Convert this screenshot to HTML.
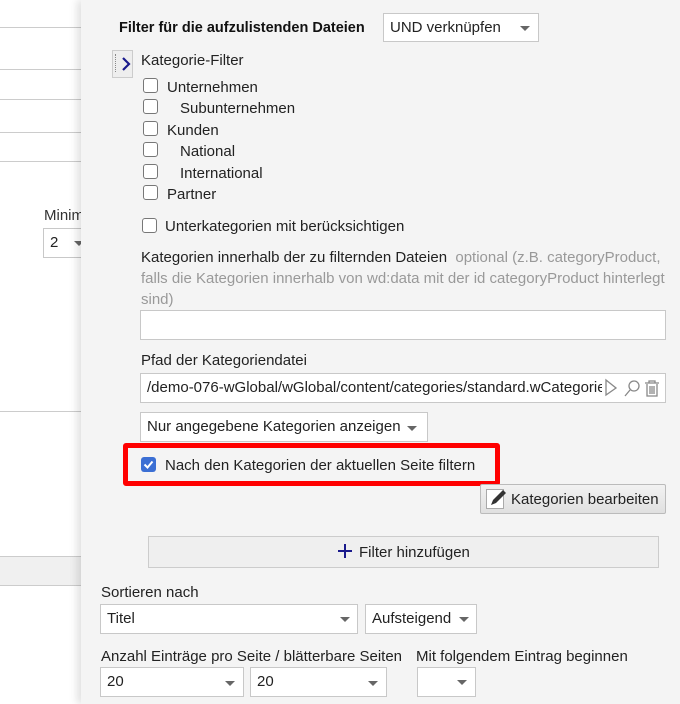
<!DOCTYPE html>
<html><head><meta charset="utf-8"><style>
*{box-sizing:border-box;margin:0;padding:0}
body{width:680px;height:704px;overflow:hidden;position:relative;background:#fff;font-family:"Liberation Sans",Arial,sans-serif;font-size:15px;color:#222}
.a{position:absolute}
.hl{position:absolute;left:0;width:82px;height:1px;background:#ccc}
#panel{position:absolute;left:81px;top:0;width:600px;height:704px;background:#f4f4f4;box-shadow:-4px 0 8px rgba(0,0,0,.12)}
.cb{position:absolute;width:15px;height:15px;border:1px solid #777;border-radius:3px;background:#fff}
.inp{position:absolute;background:#fff;border:1px solid #c8c8c8;height:30px;padding:0 6px;line-height:28px;white-space:nowrap;overflow:hidden}
.car{position:absolute;width:0;height:0;border-left:5px solid transparent;border-right:5px solid transparent;border-top:5px solid #666}
.t{position:absolute;white-space:nowrap}
</style></head><body>
<div class="hl" style="top:27px"></div>
<div class="hl" style="top:69px"></div>
<div class="hl" style="top:99px"></div>
<div class="hl" style="top:132px"></div>
<div class="hl" style="top:161px"></div>
<div class="hl" style="top:411px"></div>
<div class="a" style="left:0;top:556px;width:82px;height:30px;background:#f0f0f0;border-top:1px solid #ccc;border-bottom:1px solid #ccc"></div>
<div class="t" style="left:44px;top:207px;color:#333">Minim</div>
<div class="inp" style="left:43px;top:228px;width:50px;">2</div>
<div class="car" style="left:74px;top:241px"></div>

<div id="panel">
<div class="t" style="left:38px;top:20px;font-weight:bold;color:#111;font-size:14.5px">Filter für die aufzulistenden Dateien</div>
<div class="inp" style="left:302px;top:13px;width:156px;height:29px">UND verknüpfen</div>
<div class="car" style="left:439px;top:26px"></div>

<div class="a" style="left:31px;top:50px;width:21px;height:28px;border:1px solid #ccc;background:#eee"></div>
<div class="a" style="left:34px;top:54px;width:1px;height:18px;border-left:1px dotted #888"></div>
<svg class="a" style="left:39px;top:55px" width="12" height="18"><path d="M3 3 L9 9 L3 15" stroke="#1a1a8c" stroke-width="2.2" fill="none"/></svg>
<div class="t" style="left:60px;top:52px">Kategorie-Filter</div>

<div class="cb" style="left:62px;top:78px"></div><div class="t" style="left:86px;top:79px">Unternehmen</div>
<div class="cb" style="left:62px;top:99px"></div><div class="t" style="left:99px;top:100px">Subunternehmen</div>
<div class="cb" style="left:62px;top:121px"></div><div class="t" style="left:86px;top:122px">Kunden</div>
<div class="cb" style="left:62px;top:142px"></div><div class="t" style="left:99px;top:143px">National</div>
<div class="cb" style="left:62px;top:164px"></div><div class="t" style="left:99px;top:165px">International</div>
<div class="cb" style="left:62px;top:185px"></div><div class="t" style="left:86px;top:186px">Partner</div>

<div class="cb" style="left:61px;top:218px"></div><div class="t" style="left:84px;top:218px">Unterkategorien mit berücksichtigen</div>

<div class="a" style="left:60px;top:247px;width:530px;line-height:21px">Kategorien innerhalb der zu filternden Dateien &nbsp;<span style="color:#999">optional (z.B. categoryProduct, falls die Kategorien innerhalb von wd:data mit der id categoryProduct hinterlegt sind)</span></div>
<div class="inp" style="left:59px;top:310px;width:526px"></div>

<div class="t" style="left:60px;top:352px">Pfad der Kategoriendatei</div>
<div class="inp" style="left:59px;top:373px;width:526px;padding-right:66px">/demo-076-wGlobal/wGlobal/content/categories/standard.wCategories</div>
<div class="a" style="left:521px;top:374px;width:62px;height:28px;background:#fff"></div>
<svg class="a" style="left:523px;top:378px" width="62" height="20" viewBox="0 0 62 20" fill="none" stroke="#888" stroke-width="1.3"><path d="M2 2 L2 17 L12 10 Z"/><circle cx="30" cy="8" r="5"/><path d="M26 12 L21 18"/><path d="M41 5 H55 M45 5 V3 H51 V5 M43 6 V18 H53 V6 M46 8 V16 M48 8 V16 M50 8 V16"/></svg>

<div class="inp" style="left:59px;top:412px;width:288px">Nur angegebene Kategorien anzeigen</div>
<div class="car" style="left:326px;top:426px"></div>

<div class="a" style="left:42px;top:443px;width:377px;height:43px;border:5px solid #f00;border-radius:3px"></div>
<div class="a" style="left:60px;top:457px;width:15px;height:15px;background:#3b6fd4;border-radius:3px"></div>
<svg class="a" style="left:60px;top:457px" width="15" height="15"><path d="M3.5 7.5 L6.5 10.5 L11.5 4.5" stroke="#fff" stroke-width="2" fill="none"/></svg>
<div class="t" style="left:84px;top:457px">Nach den Kategorien der aktuellen Seite filtern</div>

<div class="a" style="left:399px;top:484px;width:186px;height:30px;background:linear-gradient(#f2f2f2,#e0e0e0);border:1px solid #bbb;border-radius:2px"></div>
<div class="a" style="left:405px;top:489px;width:18px;height:20px;background:#fff;border:1px solid #aaa"></div>
<svg class="a" style="left:405px;top:487px" width="22" height="22"><path d="M5 18 L7 13 L17 3 L20 6 L10 16 Z" fill="#333"/></svg>
<div class="t" style="left:430px;top:491px">Kategorien bearbeiten</div>

<div class="a" style="left:67px;top:536px;width:511px;height:32px;background:#efefef;border:1px solid #ccc"></div>
<svg class="a" style="left:256px;top:543px" width="16" height="16"><path d="M8 1 V15 M1 8 H15" stroke="#1a1a8c" stroke-width="2"/></svg>
<div class="t" style="left:278px;top:544px">Filter hinzufügen</div>

<div class="t" style="left:20px;top:584px">Sortieren nach</div>
<div class="inp" style="left:19px;top:604px;width:258px">Titel</div>
<div class="car" style="left:259px;top:617px"></div>
<div class="inp" style="left:284px;top:604px;width:112px">Aufsteigend</div>
<div class="car" style="left:378px;top:617px"></div>

<div class="t" style="left:20px;top:648px">Anzahl Einträge pro Seite / blätterbare Seiten</div>
<div class="t" style="left:335px;top:648px">Mit folgendem Eintrag beginnen</div>
<div class="inp" style="left:19px;top:667px;width:144px">20</div>
<div class="car" style="left:144px;top:681px"></div>
<div class="inp" style="left:169px;top:667px;width:137px">20</div>
<div class="car" style="left:287px;top:681px"></div>
<div class="inp" style="left:336px;top:667px;width:59px"></div>
<div class="car" style="left:376px;top:680px"></div>
</div>
</body></html>
